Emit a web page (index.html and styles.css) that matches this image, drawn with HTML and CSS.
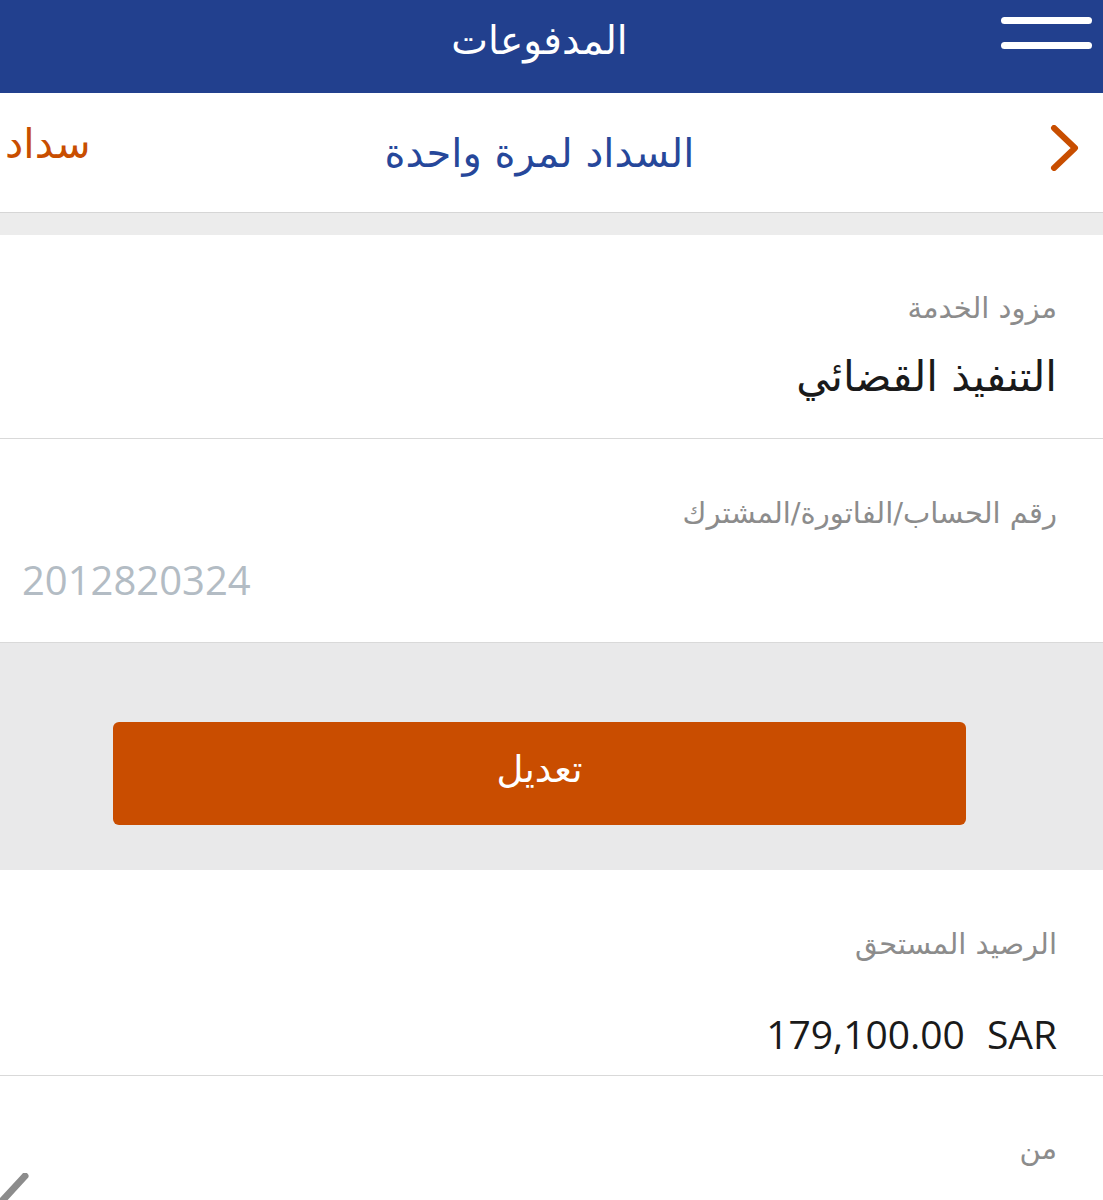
FILE: index.html
```html
<!DOCTYPE html>
<html lang="ar" dir="rtl">
<head>
<meta charset="utf-8">
<title>المدفوعات</title>
<link rel="stylesheet" href="styles.css">
</head>
<body>
<header class="topbar">
  <div class="menu">
    <span class="menu-line"></span>
    <span class="menu-line"></span>
  </div>
  <h1 class="topbar-title">المدفوعات</h1>
  <div class="spacer"></div>
</header>

<nav class="subbar">
  <div class="back">
    <svg width="30" height="46" viewBox="0 0 30 46"><path d="M4 3 L25 23 L4 43" fill="none" stroke="#c84e00" stroke-width="6" stroke-linecap="round" stroke-linejoin="round"/></svg>
  </div>
  <h2 class="subbar-title">السداد لمرة واحدة</h2>
  <div class="subbar-link">سداد</div>
</nav>

<div class="band"></div>

<section class="field">
  <div class="field-label">مزود الخدمة</div>
  <div class="field-value">التنفيذ القضائي</div>
</section>

<section class="field field-input">
  <div class="field-label">رقم الحساب/الفاتورة/المشترك</div>
  <div class="field-number">2012820324</div>
</section>

<div class="action">
  <button class="btn">تعديل</button>
</div>

<section class="field field-balance">
  <div class="field-label">الرصيد المستحق</div>
  <div class="field-amount"><span>179,100.00</span><span>SAR</span></div>
</section>

<section class="field field-from">
  <div class="field-label label-from">من</div>
  <div class="pencil">
    <svg width="32" height="28" viewBox="0 0 32 28"><line x1="25" y1="3" x2="2" y2="28" stroke="#8c8c8c" stroke-width="7" stroke-linecap="round"/></svg>
  </div>
</section>
</body>
</html>
```

FILE: styles.css
```css
html, body {
  margin: 0;
  padding: 0;
  background: #ffffff;
}
body {
  width: 1103px;
  height: 1200px;
  overflow: hidden;
  font-family: "Open Sans", "DejaVu Sans", sans-serif;
}
.topbar {
  height: 93px;
  background: #22408e;
  display: grid;
  grid-template-columns: 1fr auto 1fr;
  align-items: center;
}
.menu {
  display: flex;
  flex-direction: column;
  gap: 18px;
  padding-right: 11px;
  align-self: start;
  padding-top: 17px;
}
.menu-line {
  display: block;
  width: 91px;
  height: 7px;
  border-radius: 4px;
  background: #ffffff;
}
.topbar-title {
  margin: 0;
  color: #ffffff;
  font-family: "DejaVu Sans", sans-serif;
  font-weight: normal;
  font-size: 39px;
  line-height: 1;
  padding-bottom: 12px;
  padding-right: 24px;
}
.subbar {
  height: 119px;
  border-bottom: 1px solid #d6d6d6;
  display: grid;
  grid-template-columns: 1fr auto 1fr;
  align-items: center;
}
.back {
  padding-right: 23px;
  display: flex;
  padding-bottom: 9px;
}
.subbar-title {
  margin: 0;
  font-weight: normal;
  font-family: "DejaVu Sans", sans-serif;
  font-size: 40px;
  color: #26479a;
  line-height: 1;
  padding-right: 24px;
}
.subbar-link {
  justify-self: end;
  padding-left: 5px;
  font-family: "DejaVu Sans", sans-serif;
  font-size: 41px;
  color: #c84e00;
  line-height: 1;
  padding-bottom: 16px;
}
.band {
  height: 22px;
  background: #ececec;
}
.field {
  border-bottom: 1px solid #d9d9d9;
  padding: 0 46px 0 22px;
  display: flex;
  flex-direction: column;
  height: 203px;
  box-sizing: content-box;
}
.field-label {
  font-family: "DejaVu Sans", sans-serif;
  font-size: 29px;
  color: #8c8c8c;
  line-height: 1;
  margin-top: 60px;
}
.field-value {
  font-family: "DejaVu Sans", sans-serif;
  font-size: 42px;
  color: #1a1a1a;
  line-height: 1;
  margin-top: 33px;
}
.field:first-of-type .field-label {
  margin-top: 59px;
}
.field-number {
  direction: ltr;
  font-family: "Open Sans", sans-serif;
  font-size: 40px;
  color: #b3bcc4;
  line-height: 1;
  margin-top: 32px;
}
.action {
  height: 227px;
  background: #e9e9ea;
  display: flex;
  justify-content: center;
  align-items: flex-start;
  padding-top: 79px;
  box-sizing: border-box;
}
.btn {
  width: 853px;
  height: 103px;
  border: 0;
  border-radius: 6px;
  background: #c94d00;
  color: #ffffff;
  font-family: "DejaVu Sans", sans-serif;
  font-size: 37px;
  margin-right: 24px;
  padding: 0 0 8px;
}
.field-balance {
  height: 205px;
}
.field-amount {
  direction: ltr;
  display: flex;
  justify-content: flex-end;
  gap: 22px;
  font-family: "Open Sans", sans-serif;
  font-size: 39px;
  color: #1a1a1a;
  line-height: 1;
  margin-top: 55px;
}
.field-from {
  border-bottom: 0;
  padding-left: 0;
  position: relative;
  height: 124px;
}
.label-from {
  margin-top: 59px;
}
.pencil {
  position: absolute;
  left: 0;
  top: 97px;
  display: flex;
}
```
